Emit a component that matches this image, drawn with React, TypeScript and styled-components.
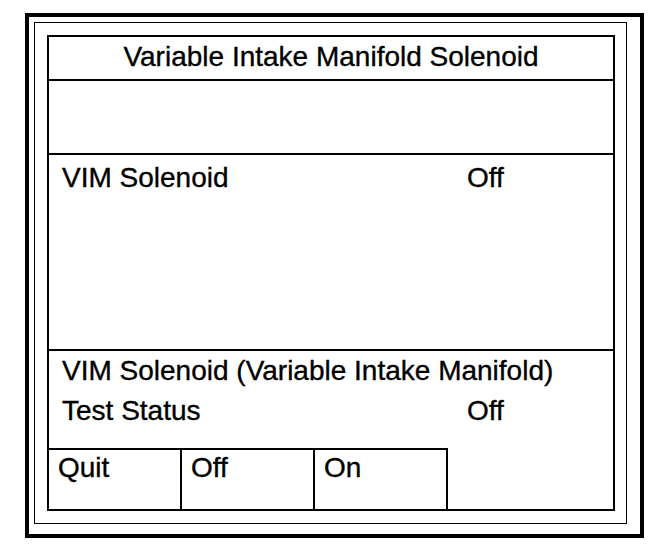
import React from "react"
import styled, { createGlobalStyle } from "styled-components"

const GlobalStyle = createGlobalStyle`
    html, body {
        margin: 0;
        padding: 0;
        background: #fff;
    }
    body {
        font-family: "Liberation Sans", Arial, sans-serif;
        color: #000;
    }
`

const Page = styled.div`
    padding: 13px 0 0 25px;
`

const OuterFrame = styled.div`
    width: 619px;
    height: 525px;
    box-sizing: border-box;
    border: 4px solid #000;
    padding: 5px 13px 10px 5px;
`

const InnerFrame = styled.div`
    height: 100%;
    box-sizing: border-box;
    border: 1px solid #000;
    padding: 12px 11px 12px 12px;
`

const Panel = styled.div`
    height: 100%;
    box-sizing: border-box;
    border: 2px solid #000;
    display: flex;
    flex-direction: column;
    font-size: 28px;
    -webkit-text-stroke: 0.35px #000;
`

const TitleRow = styled.div`
    height: 44px;
    flex: none;
    display: flex;
    align-items: center;
    justify-content: center;
    border-bottom: 2px solid #000;
    padding-bottom: 2px;
    box-sizing: border-box;
`

const Section = styled.div<{ height: number }>`
    height: ${({ height }) => height}px;
    flex: none;
    border-bottom: 2px solid #000;
    padding: 3px 0 0 13px;
    box-sizing: border-box;
`

const InfoSection = styled.div`
    height: 97px;
    flex: none;
    padding: 0 0 0 13px;
    box-sizing: border-box;
`

const Line = styled.div`
    display: grid;
    grid-template-columns: 405px 1fr;
    line-height: 40px;
    white-space: nowrap;
`

const ButtonBar = styled.div`
    flex: 1;
    display: flex;
`

const SoftKey = styled.div`
    width: 133px;
    box-sizing: border-box;
    border-top: 2px solid #000;
    border-right: 2px solid #000;
    padding: 2px 0 0 9px;
    line-height: 32px;
`

export default function App() {
    return <>
        <GlobalStyle />
        <Page>
            <OuterFrame>
                <InnerFrame>
                    <Panel>
                        <TitleRow>Variable Intake Manifold Solenoid</TitleRow>
                        <Section height={74} />
                        <Section height={196}>
                            <Line><span>VIM Solenoid</span><span>Off</span></Line>
                        </Section>
                        <InfoSection>
                            <Line><span>VIM Solenoid (Variable Intake Manifold)</span></Line>
                            <Line><span>Test Status</span><span>Off</span></Line>
                        </InfoSection>
                        <ButtonBar>
                            <SoftKey>Quit</SoftKey>
                            <SoftKey>Off</SoftKey>
                            <SoftKey>On</SoftKey>
                        </ButtonBar>
                    </Panel>
                </InnerFrame>
            </OuterFrame>
        </Page>
    </>
}
